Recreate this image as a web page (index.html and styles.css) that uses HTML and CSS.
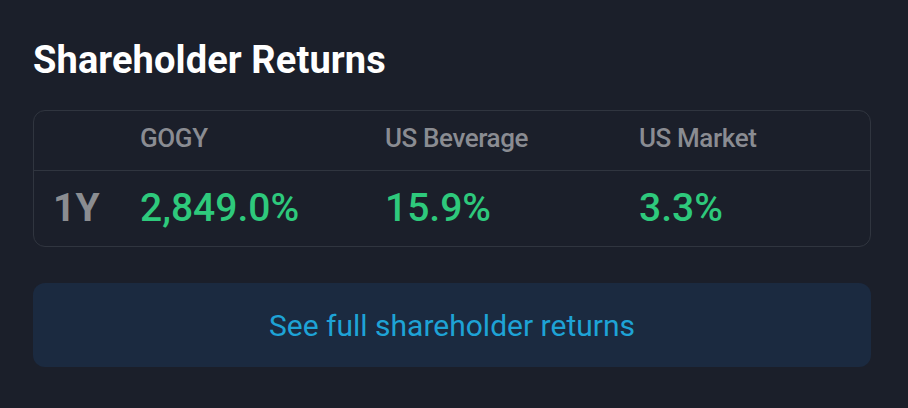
FILE: index.html
```html
<!DOCTYPE html>
<html lang="en">
<head>
<meta charset="utf-8">
<title>Shareholder Returns</title>
<link rel="stylesheet" href="styles.css">
</head>
<body>
<section class="panel">
  <h2 class="title">Shareholder Returns</h2>
  <div class="returns">
    <div class="row head">
      <span class="cell"></span>
      <span class="cell">GOGY</span>
      <span class="cell">US Beverage</span>
      <span class="cell">US Market</span>
    </div>
    <div class="row values">
      <span class="cell period">1Y</span>
      <span class="cell pos">2,849.0%</span>
      <span class="cell pos">15.9%</span>
      <span class="cell pos">3.3%</span>
    </div>
  </div>
  <a class="more" href="#">See full shareholder returns</a>
</section>
</body>
</html>
```
FILE: styles.css
```css
html, body {
  margin: 0;
  padding: 0;
  background: #1b1f2a;
}
body {
  font-family: Roboto, "Noto Sans", "Liberation Sans", sans-serif;
  width: 908px;
  height: 408px;
  overflow: hidden;
}
.panel {
  padding: 38px 37px 0 33px;
}
.title {
  margin: 0;
  font-size: 38px;
  line-height: 44px;
  font-weight: 700;
  color: #ffffff;
  letter-spacing: 0.1px;
}
.returns {
  margin-top: 28px;
  border: 1px solid #30353f;
  border-radius: 12px;
}
.row {
  display: grid;
  grid-template-columns: 87px 245px 254px 1fr;
  padding-left: 19px;
}
.head {
  border-bottom: 1px solid #30353f;
  padding-top: 12px;
  padding-bottom: 17px;
}
.head .cell {
  font-size: 26px;
  line-height: 30px;
  font-weight: 500;
  color: #8a8c92;
  letter-spacing: -0.4px;
}
.values {
  padding-top: 15px;
  padding-bottom: 15px;
}
.values .cell {
  font-size: 39px;
  line-height: 45px;
  font-weight: 500;
}
.period {
  color: #8b8d91;
  font-weight: 700 !important;
}
.pos {
  color: #2ec97c;
}
.more {
  display: flex;
  align-items: center;
  justify-content: center;
  margin-top: 36px;
  height: 84px;
  border-radius: 12px;
  background: #1b2a40;
  color: #1ea3d6;
  font-size: 30px;
  text-decoration: none;
}
```
